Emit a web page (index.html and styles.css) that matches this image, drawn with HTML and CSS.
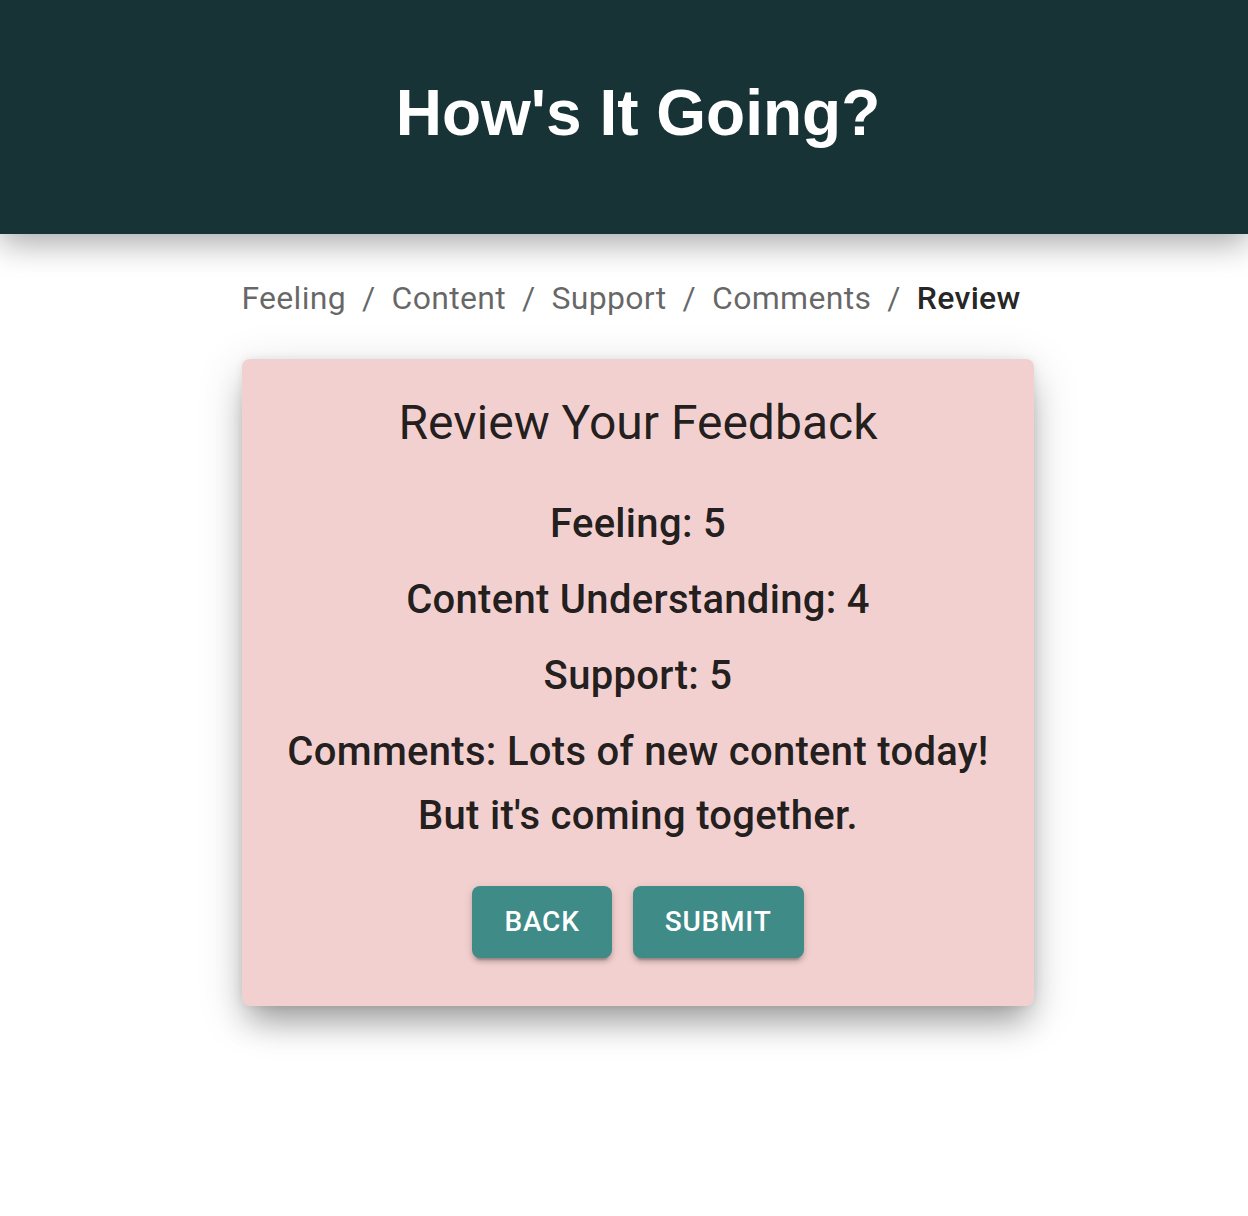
FILE: index.html
```html
<!DOCTYPE html>
<html lang="en">
<head>
<meta charset="utf-8">
<title>How's It Going?</title>
<link rel="stylesheet" href="styles.css">
</head>
<body>
<header class="app-header">
  <h1 class="app-title">How's It Going?</h1>
</header>
<main class="content">
  <nav class="crumbs">
    <span class="crumb">Feeling</span>
    <span class="sep">/</span>
    <span class="crumb">Content</span>
    <span class="sep">/</span>
    <span class="crumb">Support</span>
    <span class="sep">/</span>
    <span class="crumb">Comments</span>
    <span class="sep">/</span>
    <span class="crumb current">Review</span>
  </nav>
  <section class="card">
    <h2 class="card-title">Review Your Feedback</h2>
    <p class="item">Feeling: 5</p>
    <p class="item">Content Understanding: 4</p>
    <p class="item">Support: 5</p>
    <p class="item">Comments: Lots of new content today! But it's coming together.</p>
    <div class="actions">
      <button class="btn">Back</button>
      <button class="btn">Submit</button>
    </div>
  </section>
</main>
</body>
</html>
```

FILE: styles.css
```css
* { box-sizing: border-box; }
html, body { margin: 0; padding: 0; background: #fff; }
body { font-family: Roboto, "Noto Sans", sans-serif; min-height: 1216px; }

.app-header {
  height: 234px;
  background: #183336;
  display: flex;
  align-items: center;
  justify-content: center;
  padding-left: 28px;
  box-shadow: 0 10px 30px rgba(0, 0, 0, 0.33);
  position: relative;
  z-index: 1;
}
.app-title {
  margin: 0;
  margin-top: -8px;
  font-family: "Liberation Sans", Arial, sans-serif;
  font-weight: 700;
  font-size: 64px;
  color: #fff;
}

.content {
  display: flex;
  flex-direction: column;
  align-items: center;
  padding-left: 28px;
  padding-top: 40px;
  padding-bottom: 160px;
}

.crumbs {
  display: flex;
  align-items: center;
  font-size: 32px;
  line-height: 48px;
  color: rgba(0, 0, 0, 0.6);
  letter-spacing: 0.3px;
  margin-right: 14px;
}
.sep { margin: 0 16px; }
.crumb.current { color: rgba(0, 0, 0, 0.87); font-weight: 500; }

.card {
  margin-top: 37px;
  width: 792px;
  background: #f2d0cf;
  border-radius: 8px;
  padding: 32px 40px 48px;
  text-align: center;
  color: rgba(0, 0, 0, 0.87);
  box-shadow: 0 22px 30px -8px rgba(0, 0, 0, 0.32), 0 10px 46px 4px rgba(0, 0, 0, 0.12), 0 0 10px rgba(0, 0, 0, 0.08);
}
.card-title {
  margin: 0 0 37px;
  font-size: 48px;
  font-weight: 400;
  line-height: 64px;
}
.item {
  margin: 0 0 12px;
  font-size: 40px;
  font-weight: 500;
  line-height: 64px;
  letter-spacing: 0.3px;
}
.actions {
  display: flex;
  justify-content: center;
  gap: 21px;
  margin-top: 38px;
}
.btn {
  font-family: Roboto, sans-serif;
  font-size: 28px;
  font-weight: 500;
  text-transform: uppercase;
  letter-spacing: 0.8px;
  line-height: 48px;
  padding: 12px 32px;
  border: 0;
  border-radius: 8px;
  background: #3f8b88;
  color: #fff;
  box-shadow: 0 6px 2px -4px rgba(0,0,0,0.2), 0 4px 4px 0 rgba(0,0,0,0.14), 0 2px 10px 0 rgba(0,0,0,0.12);
}
```
